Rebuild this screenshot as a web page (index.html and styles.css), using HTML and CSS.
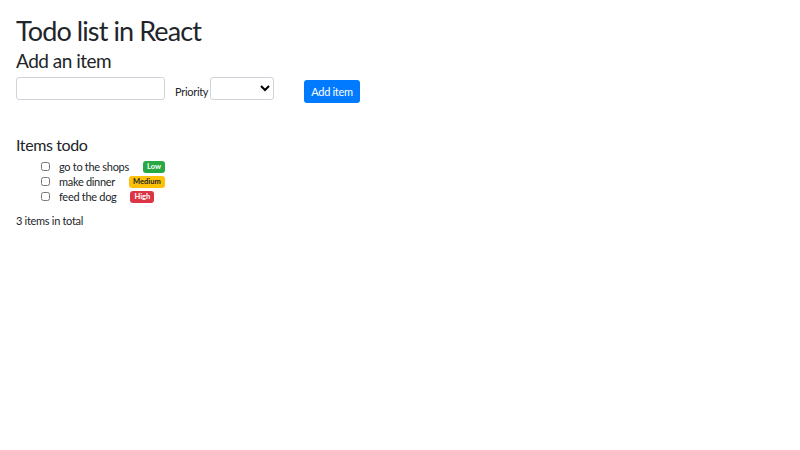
FILE: index.html
```html
<!DOCTYPE html>
<html lang="en">
<head>
  <meta charset="UTF-8">
  <title>Todo list in React</title>
  <link rel="stylesheet" href="styles.css">
</head>
<body>
  <div class="app">
    <h1>Todo list in React</h1>
    <h2>Add an item</h2>
    <form class="add-form">
      <input type="text" class="field text-field">
      <label class="prio-label">Priority</label>
      <select class="field prio-select">
        <option></option>
        <option>Low</option>
        <option>Medium</option>
        <option>High</option>
      </select>
      <button type="button" class="add-btn">Add item</button>
    </form>

    <h3>Items todo</h3>
    <ul class="todo-list">
      <li><input type="checkbox"><span class="todo-text">go to the shops</span><span class="badge low">Low</span></li>
      <li><input type="checkbox"><span class="todo-text">make dinner</span><span class="badge medium">Medium</span></li>
      <li><input type="checkbox"><span class="todo-text">feed the dog</span><span class="badge high">High</span></li>
    </ul>
    <p class="total">3 items in total</p>
  </div>
</body>
</html>
```

FILE: styles.css
```css
* {
  margin: 0;
  padding: 0;
  box-sizing: border-box;
}

body {
  font-family: Lato, sans-serif;
  color: #212529;
  background: #fff;
  font-size: 11px;
  letter-spacing: -0.3px;
}

.app {
  padding: 15px 16px;
}

h1 {
  font-size: 27px;
  font-weight: 400;
  line-height: 1.2;
  letter-spacing: -0.9px;
}

h2 {
  font-size: 19px;
  font-weight: 400;
  line-height: 1.2;
  letter-spacing: -0.5px;
  margin-top: 3px;
  margin-bottom: 4px;
}

.add-form {
  display: flex;
  align-items: flex-start;
}

.field {
  height: 23px;
  border: 1px solid #ced4da;
  border-radius: 3px;
  background: #fff;
  font-family: inherit;
  font-size: 11px;
}

.text-field {
  width: 149px;
}

.prio-label {
  margin-left: 10px;
  margin-top: 8px;
  margin-right: 2px;
}

.prio-select {
  width: 64px;
}

.add-btn {
  margin-left: 30px;
  margin-top: 3px;
  height: 23px;
  padding: 0 7px;
  background: #007bff;
  color: #fff;
  border: none;
  border-radius: 3px;
  font-family: inherit;
  font-size: 11px;
  letter-spacing: -0.3px;
}

h3 {
  font-size: 16px;
  font-weight: 400;
  line-height: 1.2;
  letter-spacing: -0.4px;
  margin-top: 32px;
  margin-bottom: 5px;
}

.todo-list {
  list-style: none;
  padding-left: 25px;
}

.todo-list li {
  display: flex;
  align-items: center;
  height: 15px;
}

.todo-list input {
  width: 9px;
  height: 9px;
  margin: 0;
}

.todo-text {
  margin-left: 9px;
  margin-right: 14px;
}

.badge {
  font-size: 7.5px;
  font-weight: 700;
  padding: 2px 4px;
  border-radius: 3px;
  line-height: 1.1;
  letter-spacing: 0;
}

.low {
  background: #28a745;
  color: #fff;
}

.medium {
  background: #ffc107;
  color: #212529;
}

.high {
  background: #dc3545;
  color: #fff;
}

.total {
  margin-top: 10px;
}
```
